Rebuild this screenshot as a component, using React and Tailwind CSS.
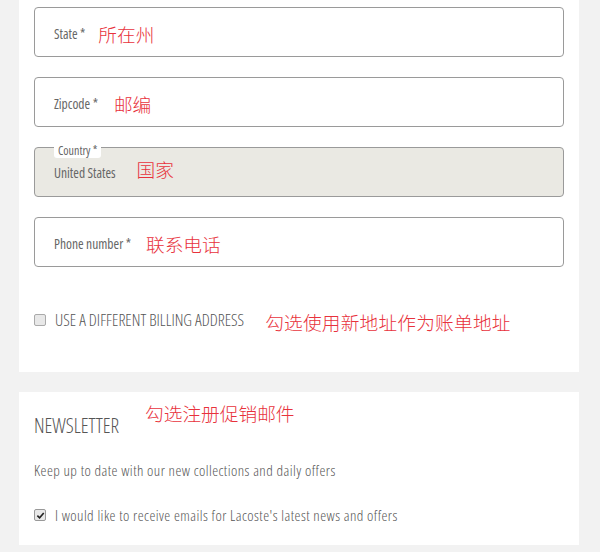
import React from 'react';

// police condensée pour tout le formulaire
const cond = "font-['Open_Sans',sans-serif] font-stretch-condensed";
const cjk = "font-['Noto_Sans_CJK_SC',sans-serif]";
const red = `${cjk} font-light text-[18.7px] text-[#e8323c] leading-none whitespace-nowrap`;

const Field = ({ label, note, noteGap }) => (
    <div className="h-[50px] rounded-[4px] border border-[#9a9a9a] bg-white flex items-center pl-[19px] pt-[5px]">
        <span className={`${cond} text-[13.5px] text-[#666]`}>{label}</span>
        <span className={`${red} ${noteGap}`}>{note}</span>
    </div>
);

const App = () => {
    return (
        <div className="w-[600px] h-[552px] overflow-hidden bg-[#f2f2f2] pl-[19px] pr-[21px]">

            {/* ADRESSE */}
            <div className="bg-white px-[15px] pt-[7px] h-[372px]">
                <div className="flex flex-col gap-[20px]">
                    <Field label="State *" note="所在州" noteGap="ml-[13px]" />
                    <Field label="Zipcode *" note="邮编" noteGap="ml-[16px]" />

                    <div className="relative h-[50px] rounded-[4px] border border-[#9a9a9a] bg-[#eae9e3] flex items-center pl-[19px] pt-[2px]">
                        <span className={`absolute -top-[5px] left-[19px] bg-white rounded-[3px] px-[4px] ${cond} text-[12px] leading-[15px] text-[#666]`}>Country *</span>
                        <span className={`${cond} text-[13.5px] text-[#666] mt-[1px]`}>United States</span>
                        <span className={`${red} ml-[21px] -mt-[8px]`}>国家</span>
                    </div>

                    <Field label="Phone number *" note="联系电话" noteGap="ml-[15px]" />
                </div>

                <div className="flex items-center mt-[42px]">
                    <span className="w-[12px] h-[12px] rounded-[2px] border border-[#aaa] bg-[#e8e8e8]"></span>
                    <span className={`${cond} font-light text-[16.4px] leading-[22px] text-[#555] ml-[9px]`}>USE A DIFFERENT BILLING ADDRESS</span>
                    <span className={`${red} ml-[21px] mt-[4px] tracking-[0.2px]`}>勾选使用新地址作为账单地址</span>
                </div>
            </div>

            {/* NEWSLETTER */}
            <div className="bg-white mt-[20px] h-[153px] px-[15px] pt-[12px]">
                <div className="flex items-start">
                    <span className={`${cond} font-light text-[20px] leading-[24px] text-[#555] mt-[10px]`}>NEWSLETTER</span>
                    <span className={`${red} ml-[26px]`}>勾选注册促销邮件</span>
                </div>
                <p className={`${cond} font-light text-[15px] tracking-[0.45px] leading-[20px] text-[#555] mt-[22px]`}>Keep up to date with our new collections and daily offers</p>
                <div className="flex items-center mt-[25px]">
                    <span className="w-[12px] h-[12px] rounded-[2px] border border-[#999] bg-[#e8e8e8] flex items-center justify-center">
                        <svg viewBox="0 0 10 10" className="w-[9px] h-[9px]">
                            <path d="M1.5 5.2 L4 7.6 L8.6 2.2" fill="none" stroke="#222" strokeWidth="1.8" />
                        </svg>
                    </span>
                    <span className={`${cond} font-light text-[15px] tracking-[0.45px] leading-[20px] text-[#555] ml-[9px]`}>I would like to receive emails for Lacoste's latest news and offers</span>
                </div>
            </div>
        </div>
    );
};

export default App;
